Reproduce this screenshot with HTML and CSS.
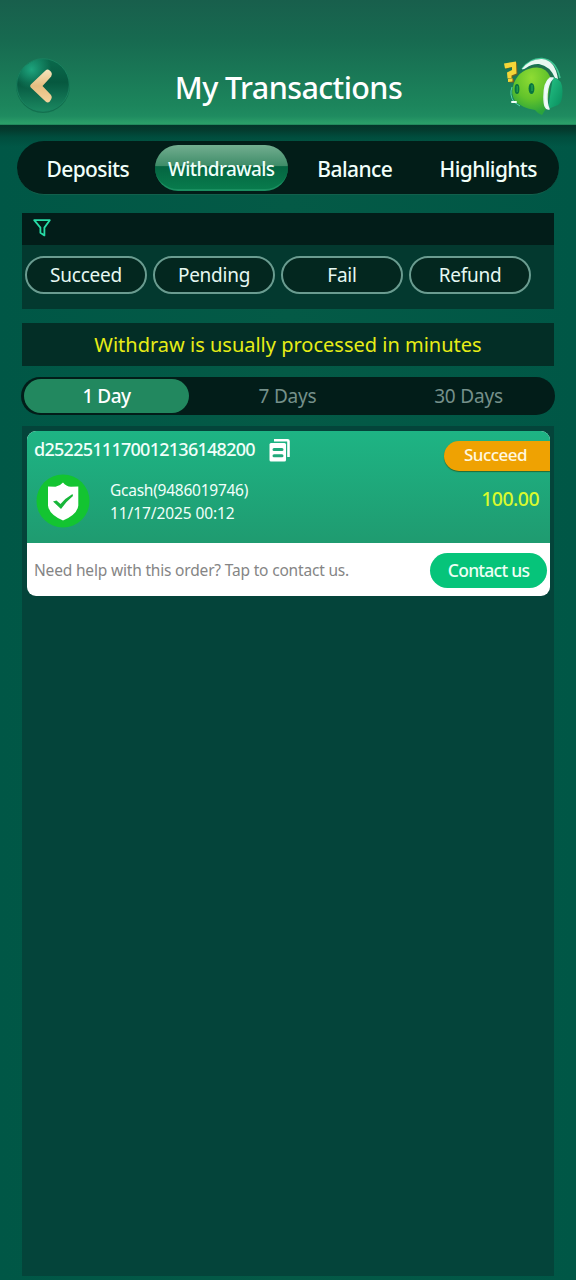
FILE: index.html
```html
<!DOCTYPE html>
<html lang="en">
<head>
<meta charset="utf-8">
<title>My Transactions</title>
<link rel="stylesheet" href="styles.css">
</head>
<body>
<header class="header">
  <svg class="back" viewBox="0 0 58 58" role="img" aria-label="Back">
    <defs>
      <linearGradient id="orb" x1="0" y1="0" x2="0" y2="1"><stop offset="0" stop-color="#0a6a4c"/><stop offset=".45" stop-color="#06583f"/><stop offset=".62" stop-color="#0c664a"/><stop offset="1" stop-color="#1b8860"/></linearGradient>
      <radialGradient id="shine" cx=".28" cy=".2" r=".38"><stop offset="0" stop-color="#1da47d"/><stop offset="1" stop-color="#1da47d" stop-opacity="0"/></radialGradient>
      <linearGradient id="gold" x1="0" y1="0" x2="0" y2="1"><stop offset="0" stop-color="#f5e5bd"/><stop offset=".5" stop-color="#e6bd80"/><stop offset="1" stop-color="#f3d49d"/></linearGradient>
    </defs>
    <circle cx="29" cy="30" r="27" fill="#0c6044" opacity=".6"/>
    <circle cx="29" cy="29" r="26.3" fill="url(#orb)" stroke="#1a8562" stroke-width=".8"/>
    <circle cx="29" cy="29" r="26" fill="url(#shine)"/>
    <path d="M31.500 14.500q2-2 4.200 0l1.500 1.500q1.500 2 0 4.500L28.500 30l8.500 9q1.500 2 .3 4l-1.500 2.500q-2 2-4.200 0L16.800 31.500q-1.500-1.500 0-3z" fill="url(#gold)"/>
  </svg>
  <h1 class="title">My Transactions</h1>
  <svg class="support" viewBox="0 0 64 64" role="img" aria-label="Support">
    <defs>
      <radialGradient id="face" cx=".5" cy=".22" r=".75"><stop offset="0" stop-color="#8fdc33"/><stop offset=".6" stop-color="#62c32b"/><stop offset="1" stop-color="#2ba43b"/></radialGradient>
      <linearGradient id="cup" x1="0" y1="0" x2="1" y2="1"><stop offset="0" stop-color="#26c487"/><stop offset="1" stop-color="#078c5c"/></linearGradient>
    </defs>
    <path d="M22 13Q30 2 42 2.500 56 4 60 22" fill="none" stroke="#3fc493" stroke-width="1.500"/>
    <path d="M28 12q12-6 22 3l4 9-8 2z" fill="#246f4b"/>
    <path d="M14 27Q20 12 37 11.500q10 .5 13.500 10L47 52q-3 3-5 7-4-1-7-5-13-2-20-9-5-8-1-18z" fill="url(#face)"/>
    <path d="M22 13Q30 2.500 42 3q13 1 16 20l-3-1Q50 10 39 8q-7-.5-13 4-3 2-4 1z" fill="#eaf8f1"/>
    <path d="M53 21q9.500 2 9.500 14T58 49l-10 4z" fill="url(#cup)"/>
    <path d="M53 22Q47.500 28 47 38q-.5 10 2 15-5 1-5-12 0-15 6-19z" fill="#f4fcfa" stroke="#e8f6f6" stroke-width="1.500" stroke-linejoin="round"/>
    <path d="M12 31Q9 39 14 46l6 4" fill="none" stroke="#54d6ab" stroke-width="1"/>
    <path d="M12 46h4" stroke="#f1fff8" stroke-width="2" stroke-linecap="round"/>
    <ellipse cx="17" cy="33" rx="2.400" ry="5" fill="#087441"/><ellipse cx="31.500" cy="32.500" rx="2.900" ry="5.600" fill="#087441"/>
    <path d="M17.300 30v6M32 29v6" stroke="#1f9a4e" stroke-width="1.500"/>
    <path d="M5.500 8.500l11.500-2 .5 12-5 2v3l-4 .5-.5-6.500 5-3v-3.500l-7 2zM9 24l5-1v3.500H9z" fill="#76601e"/>
    <path d="M4 7.500l12-2 .5 12-5 2v2.500l-4 .5-.5-6 5-2.500V11l-7 1.500zM8 23l4.500-.8v3.300L8 26z" fill="#f5d638"/>
  </svg>
</header>
<main class="page">
  <nav class="tabs">
    <a class="tab">Deposits</a>
    <a class="tab tab-active">Withdrawals</a>
    <a class="tab">Balance</a>
    <a class="tab">Highlights</a>
  </nav>
  <section class="filters">
    <div class="filter-head">
      <svg class="funnel" viewBox="0 0 18 18"><path d="M1.200 1.200h15.600l-5.400 7.400v7.800l-4-2.600V8.600z" fill="none" stroke="#27dca6" stroke-width="1.800" stroke-linejoin="round"/></svg>
    </div>
    <div class="chips">
      <button class="chip">Succeed</button>
      <button class="chip">Pending</button>
      <button class="chip">Fail</button>
      <button class="chip">Refund</button>
    </div>
  </section>
  <p class="notice">Withdraw is usually processed in minutes</p>
  <div class="range">
    <button class="day day-active">1 Day</button>
    <button class="day">7 Days</button>
    <button class="day">30 Days</button>
  </div>
  <section class="list">
    <article class="card">
      <div class="card-top">
        <div class="info">
          <div class="order">
            <span class="order-id">d2522511170012136148200</span>
            <svg class="copy" viewBox="0 0 22 24"><path d="M5 2.200h13.500q1 0 1 1V19" fill="none" stroke="#fff" stroke-width="2.600"/><rect x=".5" y="5" width="16.500" height="18.500" rx="1.500" fill="#fff"/><path d="M5 11.500h8M5 17.800h8" stroke="#20a97b" stroke-width="3" stroke-linecap="round"/></svg>
          </div>
          <div class="account">
            <svg class="shield" viewBox="0 0 54 54"><circle cx="27" cy="27" r="26.500" fill="#13c431"/><path d="M27 8.500q3 4 8 4.300l7.300-.3v19q-1 9-15.300 15Q13 40.500 12 31.500v-19l7.500.3Q24 12 27 8.500z" fill="#fff"/><path d="M17 27.500l3.500-1 4 3.500q5-6 12-10l.5 2Q30 27.500 25 35z" fill="#18b63a"/></svg>
            <div class="details"><div>Gcash(9486019746)</div><div class="time">11/17/2025 00:12</div></div>
          </div>
        </div>
        <div class="result">
          <span class="status">Succeed</span>
          <span class="amount">100.00</span>
        </div>
      </div>
      <div class="card-help">
        <span class="help">Need help with this order? Tap to contact us.</span>
        <button class="contact">Contact us</button>
      </div>
    </article>
  </section>
</main>
</body>
</html>
```
FILE: styles.css
```css
* { box-sizing: border-box; }
body {
  margin: 0;
  height: 1280px;
  display: flex;
  flex-direction: column;
  overflow: hidden;
  font-family: "Noto Sans", "Open Sans", sans-serif;
  color: #f1fffa;
  background: linear-gradient(90deg, #005746, #045a46 50%, #005746);
}
button { font: inherit; letter-spacing: inherit; color: inherit; border: 0; padding: 0; margin: 0; background: none; white-space: nowrap; }
span { white-space: nowrap; }
.header {
  height: 125px;
  flex: none;
  display: flex;
  justify-content: space-between;
  align-items: flex-start;
  padding: 56px 12px 0 14px;
  background: linear-gradient(#185f4c 0, #176a50 40px, #1c855c 105px, #1f8b60 116px, #2a9e68 123px, #2a9e68 124px, #19734f 125px);
}
.back { width: 58px; height: 58px; }
.title { margin: 11px 0 0 5px; font-size: 30.5px; line-height: 40px; font-weight: 500; letter-spacing: -0.6px; color: #fff; white-space: nowrap; }
.support { width: 64px; height: 64px; }
.page {
  flex: 1;
  display: flex;
  flex-direction: column;
  align-items: center;
  padding: 16px 0 4px;
  background: linear-gradient(#033529 0, #043b2e 5px, #004d3d 12px, transparent 22px);
}
.tabs {
  width: 542px;
  height: 54px;
  flex: none;
  display: grid;
  grid-template-columns: repeat(4, 1fr);
  padding: 4px 4px;
  border-radius: 27px;
  background: #021d18;
  border-bottom: 1px solid #12604c;
  font-size: 21px;
  font-weight: 500;
  letter-spacing: -0.6px;
}
.tab { display: flex; justify-content: center; align-items: center; height: 48px; }
.tab-active {
  height: 46px;
  padding-top: 3px;
  border-radius: 23px;
  background: linear-gradient(#73ae90 0, #3e8c68 48%, #046541 49%, #087b4c 100%);
  border-bottom: 2px solid #1a8f60;
  font-size: 19px;
}
.filters { width: 532px; height: 96px; flex: none; margin-top: 18px; background: #03392f; }
.filter-head { height: 32px; padding: 6px 0 0 11px; background: #021d19; }
.funnel { display: block; width: 18px; height: 18px; }
.chips { display: flex; gap: 6px; padding: 11px 3px; letter-spacing: -0.25px; }
.chip { width: 122px; height: 38px; border: 2px solid #6a9c90; border-radius: 19px; background: #03271f; font-size: 19px; color: #e6f8f2; }
.notice { width: 532px; height: 43px; flex: none; margin: 14px 0 0; background: #032e26; color: #e7ed16; text-align: center; font-size: 20px; line-height: 44px; white-space: nowrap; }
.range { width: 534px; height: 38px; flex: none; margin-top: 11px; padding: 2px 3px; display: grid; grid-template-columns: repeat(3, 165px); gap: 16px; border-radius: 19px; background: #021d19; font-size: 19px; letter-spacing: -0.2px; color: #75908a; }
.day { height: 34px; }
.day-active { border-radius: 17px; background: #22885f; color: #fff; font-weight: 500; letter-spacing: -0.5px; }
.list { width: 532px; flex: 1; margin-top: 11px; padding: 5px 4px 5px 5px; background: #04443a; }
.card { width: 523px; border-radius: 9px; overflow: hidden; background: #fff; }
.card-top { height: 112px; display: flex; justify-content: space-between; background: linear-gradient(#1eb484, #1f9b70); }
.info { padding: 6px 0 0 7px; }
.order { display: flex; align-items: center; height: 25px; gap: 14px; }
.order-id { margin-top: -2px; font-size: 18px; font-weight: 500; line-height: 24px; letter-spacing: -0.73px; }
.copy { width: 22px; height: 24px; }
.account { display: flex; gap: 20px; padding: 12px 0 0 2px; }
.shield { width: 54px; height: 54px; }
.details { padding-top: 5px; font-size: 15.5px; line-height: 23px; letter-spacing: -0.25px; }
.time { letter-spacing: -0.1px; }
.result { width: 106px; padding-top: 10px; display: flex; flex-direction: column; }
.status { height: 30px; border-radius: 15px 0 0 15px; background: #efa202; box-shadow: 0 1px 1px #246b35; font-size: 17px; font-weight: 500; line-height: 28px; text-align: center; padding-right: 3px; letter-spacing: -0.55px; color: #fff8e1; }
.amount { margin-top: 14px; padding-right: 11px; text-align: right; font-size: 19.5px; font-weight: 500; line-height: 28px; letter-spacing: -0.55px; color: #d9fa2e; }
.card-help { height: 53px; display: flex; justify-content: space-between; align-items: center; padding: 1px 3px 0 7px; }
.help { font-size: 15.5px; letter-spacing: -0.18px; color: #858585; }
.contact { width: 117px; height: 35px; border-radius: 18px; background: #06c47a; font-size: 17.5px; font-weight: 500; letter-spacing: -0.75px; color: #edfff5; }
```
